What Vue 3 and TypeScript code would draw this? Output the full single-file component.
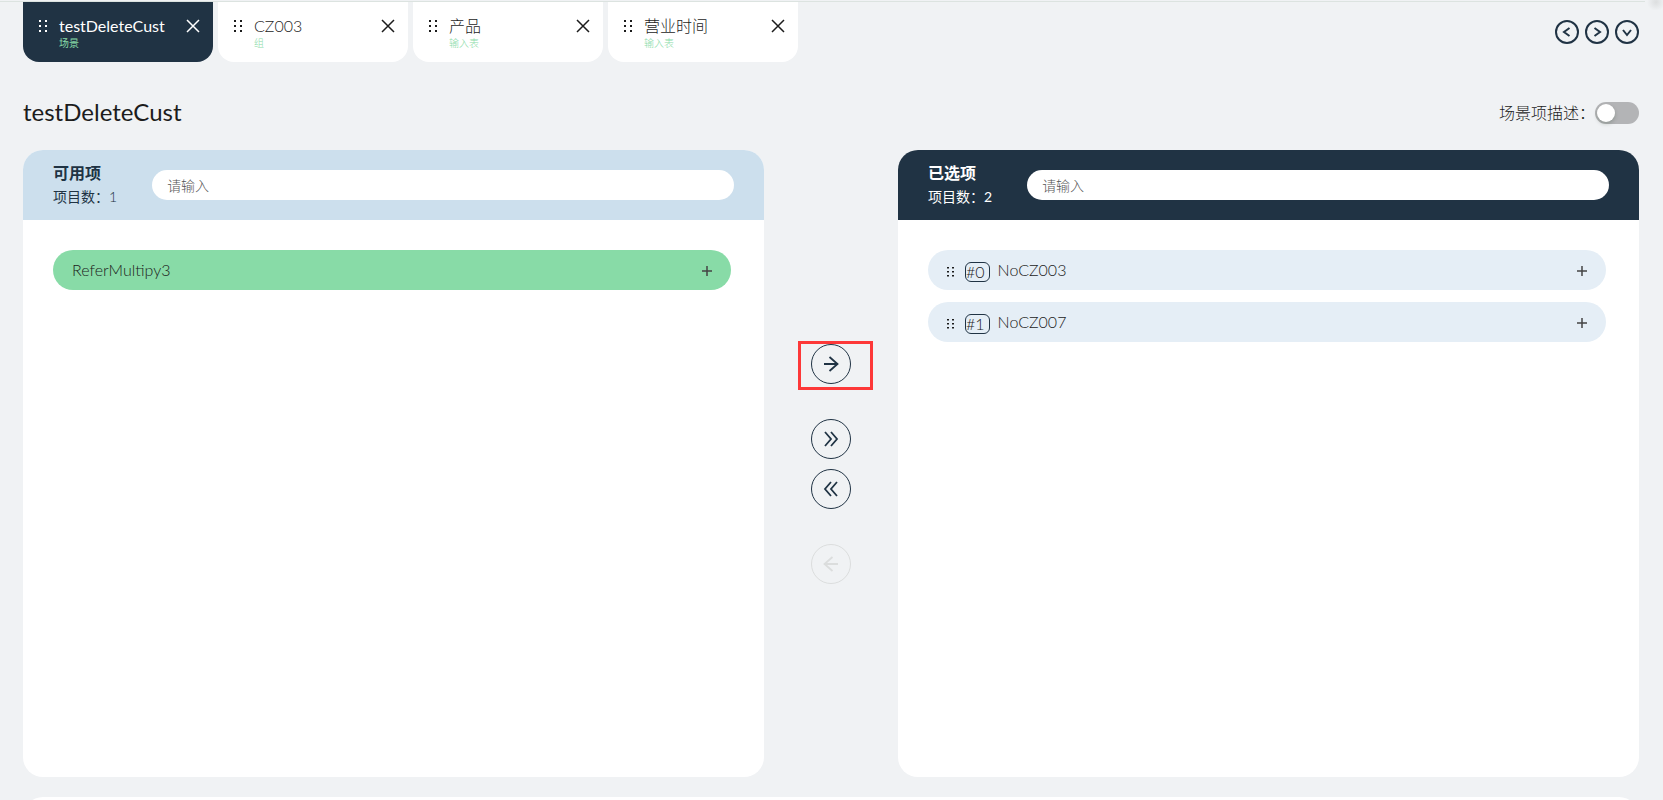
<script setup lang="ts">
import { ref } from 'vue'

interface Tab {
  name: string
  kind: string
  active: boolean
}

interface Direction {
  label: string
  path: string
  disabled: boolean
  marked: boolean
  spaced: boolean
}

const tabs: Tab[] = [
  { name: 'testDeleteCust', kind: '场景', active: true },
  { name: 'CZ003', kind: '组', active: false },
  { name: '产品', kind: '输入表', active: false },
  { name: '营业时间', kind: '输入表', active: false },
]

const pagers = [
  { label: '上一个', path: 'M14.5 8 9 12l5.500 4' },
  { label: '下一个', path: 'M9.500 8 15 12l-5.500 4' },
  { label: '更多', path: 'M8 10l4 5 4-5' },
]

const moves: Direction[] = [
  { label: '添加', path: 'M13 20h14M18.500 13l8 7-8 7', disabled: false, marked: true, spaced: true },
  { label: '全部添加', path: 'M14 13l6 7-6 7M20 13l6 7-6 7', disabled: false, marked: false, spaced: false },
  { label: '全部移除', path: 'M20 13l-6 7 6 7M26 13l-6 7 6 7', disabled: false, marked: false, spaced: true },
  { label: '移除', path: 'M27 20H13M21.500 13l-8 7 8 7', disabled: true, marked: false, spaced: false },
]

const available = ['ReferMultipy3']
const chosen = ['NoCZ003', 'NoCZ007']

const showDescription = ref(false)
const availableQuery = ref('')
const chosenQuery = ref('')
</script>

<template>
  <div class="page">
    <span class="corner"></span>
    <header class="topbar">
      <nav class="tabs">
        <div v-for="tab in tabs" :key="tab.name" class="tab" :class="{ active: tab.active }">
          <svg class="grip" width="10" height="13" viewBox="0 0 10 13" fill="currentColor" aria-hidden="true">
            <path d="M1 0h2v2H1zM7 0h2v2H7zM1 5h2v2H1zM7 5h2v2H7zM1 10h2v2H1zM7 10h2v2H7z" />
          </svg>
          <a href="#" class="tab-text">
            <span class="tab-name">{{ tab.name }}</span>
            <span class="tab-kind">{{ tab.kind }}</span>
          </a>
          <button class="close" type="button" aria-label="关闭">
            <svg width="14" height="14" viewBox="0 0 14 14" fill="none" stroke="currentColor" stroke-width="1.500">
              <path d="M1 1l12 12M13 1L1 13" />
            </svg>
          </button>
        </div>
      </nav>
      <div class="pagers">
        <button v-for="pager in pagers" :key="pager.label" class="pager" type="button" :aria-label="pager.label">
          <svg width="24" height="24" viewBox="0 0 24 24" fill="none" stroke="currentColor" stroke-width="2">
            <circle cx="12" cy="12" r="11" />
            <path :d="pager.path" />
          </svg>
        </button>
      </div>
    </header>

    <div class="heading">
      <h1>testDeleteCust</h1>
      <label class="switch">
        <span>场景项描述：</span>
        <input v-model="showDescription" type="checkbox" role="switch" />
      </label>
    </div>

    <main class="transfer">
      <section class="panel">
        <div class="panel-head light">
          <div class="summary">
            <h2>可用项</h2>
            <p>项目数：<span class="count">{{ available.length }}</span></p>
          </div>
          <input v-model="availableQuery" class="search" type="text" placeholder="请输入" aria-label="可用项" />
        </div>
        <ul class="list">
          <li v-for="item in available" :key="item" class="item green">
            <span class="item-name">{{ item }}</span>
            <button class="plus" type="button" aria-label="展开">
              <svg width="10" height="10" viewBox="0 0 10 10" fill="none" stroke="currentColor" stroke-width="1.500">
                <path d="M5 0v10M0 5h10" />
              </svg>
            </button>
          </li>
        </ul>
      </section>

      <div class="moves">
        <div v-for="move in moves" :key="move.label" class="move-slot" :class="{ spaced: move.spaced }">
          <button class="move" type="button" :disabled="move.disabled" :aria-label="move.label">
            <svg width="40" height="40" viewBox="0 0 40 40" fill="none" stroke="currentColor">
              <circle cx="20" cy="20" r="19.500" />
              <path :d="move.path" stroke-width="1.800" />
            </svg>
          </button>
          <span v-if="move.marked" class="marker"></span>
        </div>
      </div>

      <section class="panel">
        <div class="panel-head dark">
          <div class="summary">
            <h2>已选项</h2>
            <p>项目数：<span class="count">{{ chosen.length }}</span></p>
          </div>
          <input v-model="chosenQuery" class="search" type="text" placeholder="请输入" aria-label="已选项" />
        </div>
        <ul class="list">
          <li v-for="(item, index) in chosen" :key="item" class="item">
            <svg class="item-grip" width="8" height="10" viewBox="0 0 8 10" fill="currentColor" aria-hidden="true">
              <path d="M0 0h2v1.500H0zM5 0h2v1.500H5zM0 4h2v1.500H0zM5 4h2v1.500H5zM0 8h2v1.500H0zM5 8h2v1.500H5z" />
            </svg>
            <span class="order">#{{ index }}</span>
            <span class="item-name">{{ item }}</span>
            <button class="plus" type="button" aria-label="展开">
              <svg width="10" height="10" viewBox="0 0 10 10" fill="none" stroke="currentColor" stroke-width="1.500">
                <path d="M5 0v10M0 5h10" />
              </svg>
            </button>
          </li>
        </ul>
      </section>
    </main>

    <section class="next-panel"></section>
  </div>
</template>

<style>
body {
  margin: 0;
  background: #f0f2f4;
}
</style>

<style scoped>
.page {
  box-sizing: border-box;
  position: relative;
  display: flex;
  flex-direction: column;
  height: 100vh;
  padding: 1px 24px 0 23px;
  overflow: hidden;
  background: #f0f2f4;
  color: #1c1c1c;
  font-family: Lato, "Noto Sans CJK SC", sans-serif;
  font-size: 16px;
  font-weight: 300;
}

.page::before {
  content: "";
  flex: none;
  height: 1px;
  margin: 0 -24px;
  background: #dce3e0;
}

.corner {
  position: absolute;
  top: 0;
  right: 0;
  width: 18px;
  height: 10px;
  background: radial-gradient(circle at 11px 2px, #dcdedf, #f0f2f4 9px);
}

button {
  display: flex;
  padding: 0;
  border: 0;
  background: none;
  color: inherit;
  cursor: pointer;
}

.topbar {
  display: flex;
  justify-content: space-between;
}

.tabs {
  display: flex;
  gap: 5px;
}

.tab {
  box-sizing: border-box;
  display: flex;
  align-items: flex-start;
  width: 190px;
  height: 60px;
  padding: 18px 13px 0 15px;
  border-radius: 0 0 16px 16px;
  background: #fff;
}

.tab.active {
  background: #203344;
  color: #fff;
  font-weight: 400;
}

.grip {
  flex: none;
}

.tab-text {
  display: flex;
  flex: 1;
  flex-direction: column;
  margin: -5px 0 0 11px;
  color: inherit;
  text-decoration: none;
}

.tab-name {
  line-height: 22px;
}

.tab-kind {
  color: #88dba7;
  font-size: 10px;
  line-height: 12px;
}

.close {
  margin-top: -1px;
}

.pagers {
  display: flex;
  gap: 6px;
  margin-top: 18px;
  color: #203344;
}

.pager {
  height: 24px;
}

.heading {
  display: flex;
  align-items: center;
  justify-content: space-between;
  height: 60px;
  margin: 20px 0 8px;
}

h1 {
  margin: 0;
  font-size: 24px;
  font-weight: 400;
  line-height: 32px;
}

.switch {
  display: flex;
  align-items: center;
}

.switch input {
  appearance: none;
  box-sizing: border-box;
  width: 44px;
  height: 22px;
  margin: 2px 0 0;
  padding: 2px;
  border-radius: 11px;
  background: #b3b4b6;
}

.switch input::before {
  content: "";
  display: block;
  width: 18px;
  height: 18px;
  border-radius: 50%;
  background: #fff;
  box-shadow: 0 2px 4px rgba(0, 35, 11, 0.2);
}

.switch input:checked {
  background: #88dba7;
}

.switch input:checked::before {
  margin-left: auto;
}

.transfer {
  display: flex;
  flex: 1;
  min-height: 0;
}

.panel {
  flex: 1;
  min-width: 0;
  overflow: hidden;
  border-radius: 20px;
  background: #fff;
}

.panel-head {
  box-sizing: border-box;
  display: flex;
  align-items: center;
  gap: 35px;
  height: 70px;
  padding: 0 30px;
}

.panel-head.light {
  background: #ccdfed;
  color: #203344;
}

.panel-head.dark {
  background: #203344;
  color: #fff;
}

h2,
p {
  margin: 0;
  line-height: 24px;
}

h2 {
  font-size: 16px;
  font-weight: 700;
}

p {
  font-size: 14px;
  font-weight: 400;
  white-space: nowrap;
}

.light .count {
  font-weight: 300;
}

.search {
  box-sizing: border-box;
  flex: 1;
  min-width: 0;
  height: 30px;
  padding: 0 15px;
  border: 0;
  border-radius: 15px;
  outline: 0;
  background: #fff;
  color: #203344;
  font-family: inherit;
  font-size: 14px;
  font-weight: 300;
}

.search::placeholder {
  color: #555;
}

.list {
  display: flex;
  flex-direction: column;
  gap: 12px;
  margin: 0;
  padding: 30px 33px 30px 30px;
  list-style: none;
}

.item {
  box-sizing: border-box;
  display: flex;
  align-items: center;
  height: 40px;
  padding: 0 19px;
  border-radius: 20px;
  background: #e5eef6;
}

.item.green {
  background: #88dba7;
}

.item-grip {
  margin: 3px 10px 0 0;
}

.order {
  box-sizing: border-box;
  height: 20px;
  margin: 3px 8px 0 0;
  padding-right: 4px;
  border: 1px solid #203344;
  border-radius: 6px;
  line-height: 18px;
}

.item-name {
  flex: 1;
  line-height: 22px;
}

.plus {
  margin-top: 2px;
  color: #444;
}

.moves {
  display: flex;
  flex: none;
  flex-direction: column;
  align-items: center;
  justify-content: center;
  gap: 10px;
  width: 134px;
  color: #203344;
}

.move-slot {
  position: relative;
}

.move-slot.spaced {
  margin-bottom: 25px;
}

.move:disabled {
  color: #dbdddd;
  cursor: default;
}

.marker {
  position: absolute;
  top: -3px;
  left: -13px;
  box-sizing: border-box;
  width: 75px;
  height: 49px;
  border: 3px solid #fd3838;
  pointer-events: none;
}

.next-panel {
  flex: none;
  height: 40px;
  margin: 20px 0 -37px;
  border-radius: 20px;
  background: #fff;
}
</style>
